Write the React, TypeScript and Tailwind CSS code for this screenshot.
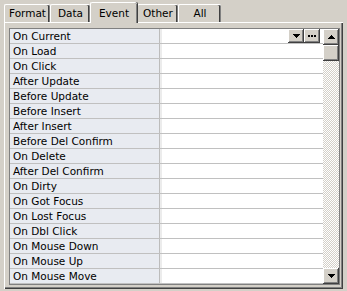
const events = [
  "On Current",
  "On Load",
  "On Click",
  "After Update",
  "Before Update",
  "Before Insert",
  "After Insert",
  "Before Del Confirm",
  "On Delete",
  "After Del Confirm",
  "On Dirty",
  "On Got Focus",
  "On Lost Focus",
  "On Dbl Click",
  "On Mouse Down",
  "On Mouse Up",
  "On Mouse Move",
];

const tabs = [
  { label: "Format", w: "w-[46px]" },
  { label: "Data", w: "w-[40px]" },
  { label: "Event", w: "w-[47px]", active: true },
  { label: "Other", w: "w-[41px]" },
  { label: "All", w: "w-[43px]" },
];

// classic raised 3D bevel
const bevel =
  "bg-[#d4d0c8] shadow-[inset_-1px_-1px_#404040,inset_1px_1px_#ffffff,inset_-2px_-2px_#808080,inset_2px_2px_#d4d0c8]";

function DownArrow() {
  return (
    <svg width="7" height="4" viewBox="0 0 7 4" className="block">
      <path d="M0 0h7v1H0zM1 1h5v1H1zM2 2h3v1H2zM3 3h1v1H3z" fill="#000" />
    </svg>
  );
}

function UpArrow() {
  return (
    <svg width="7" height="4" viewBox="0 0 7 4" className="block">
      <path d="M3 0h1v1H3zM2 1h3v1H2zM1 2h5v1H1zM0 3h7v1H0z" fill="#000" />
    </svg>
  );
}

function Dots() {
  return (
    <svg width="8" height="2" viewBox="0 0 8 2" className="block">
      <path d="M0 0h2v2H0zM3 0h2v2H3zM6 0h2v2H6z" fill="#000" />
    </svg>
  );
}

export default function App() {
  return (
    <div className="w-[347px] h-[291px] bg-[#d4d0c8] overflow-hidden font-['DejaVu_Sans',sans-serif] text-[10.5px] text-black leading-none">
      {/* ── Tab strip ─────────────────────────────────────────────── */}
      <div className="flex items-end h-[22px] pl-[4px]">
        {tabs.map((t) =>
          t.active ? (
            <div
              key={t.label}
              className={`${t.w} h-[21px] -mb-px relative z-10 flex items-start justify-center pt-[5px] bg-[#d4d0c8] border-t border-l border-white rounded-tl-[2px] rounded-tr-[2px] shadow-[inset_-1px_0_#808080,1px_0_#404040]`}
            >
              {t.label}
            </div>
          ) : (
            <div
              key={t.label}
              className={`${t.w} h-[18px] flex items-center justify-center bg-[#d4d0c8] border-t border-l border-white rounded-tl-[2px] rounded-tr-[2px] shadow-[inset_-1px_0_#808080,inset_-2px_0_#404040]`}
            >
              {t.label}
            </div>
          )
        )}
      </div>

      {/* ── Tab panel ─────────────────────────────────────────────── */}
      <div className="ml-[4px] w-[339px] h-[267px] border-t border-l border-white shadow-[inset_-1px_-1px_#404040,inset_-2px_-2px_#808080] pt-[5px] pl-[4px]">
        <div className="w-[331px] h-[257px] border border-[#808080] flex bg-white">
          {/* rows */}
          <div className="w-[313px] flex flex-col">
            {events.map((e, i) => (
              <div key={e} className="flex h-[15px] border-b border-[#c0c0c0]">
                <div className="w-[150px] bg-[#e8ebf1] flex items-center pl-[3px] border-r border-[#bcbcbc]">
                  {e}
                </div>
                <div className="flex-1 flex justify-end border-l-2 border-[#ececec] pr-[3px]">
                  {i === 0 && (
                    <>
                      <div className={`w-[16px] h-[14px] flex items-center justify-center ${bevel}`}>
                        <DownArrow />
                      </div>
                      <div className={`w-[16px] h-[14px] flex items-center justify-center ${bevel}`}>
                        <Dots />
                      </div>
                    </>
                  )}
                </div>
              </div>
            ))}
          </div>

          {/* scrollbar */}
          <div className="w-[16px] flex flex-col">
            <div className={`h-[16px] flex items-center justify-center ${bevel}`}>
              <UpArrow />
            </div>
            <div className={`h-[16px] ${bevel}`} />
            <div className="flex-1 bg-[repeating-conic-gradient(#d4d0c8_0_25%,#ffffff_0_50%)] bg-[length:2px_2px]" />
            <div className={`h-[16px] flex items-center justify-center ${bevel}`}>
              <DownArrow />
            </div>
          </div>
        </div>
      </div>
    </div>
  );
}
